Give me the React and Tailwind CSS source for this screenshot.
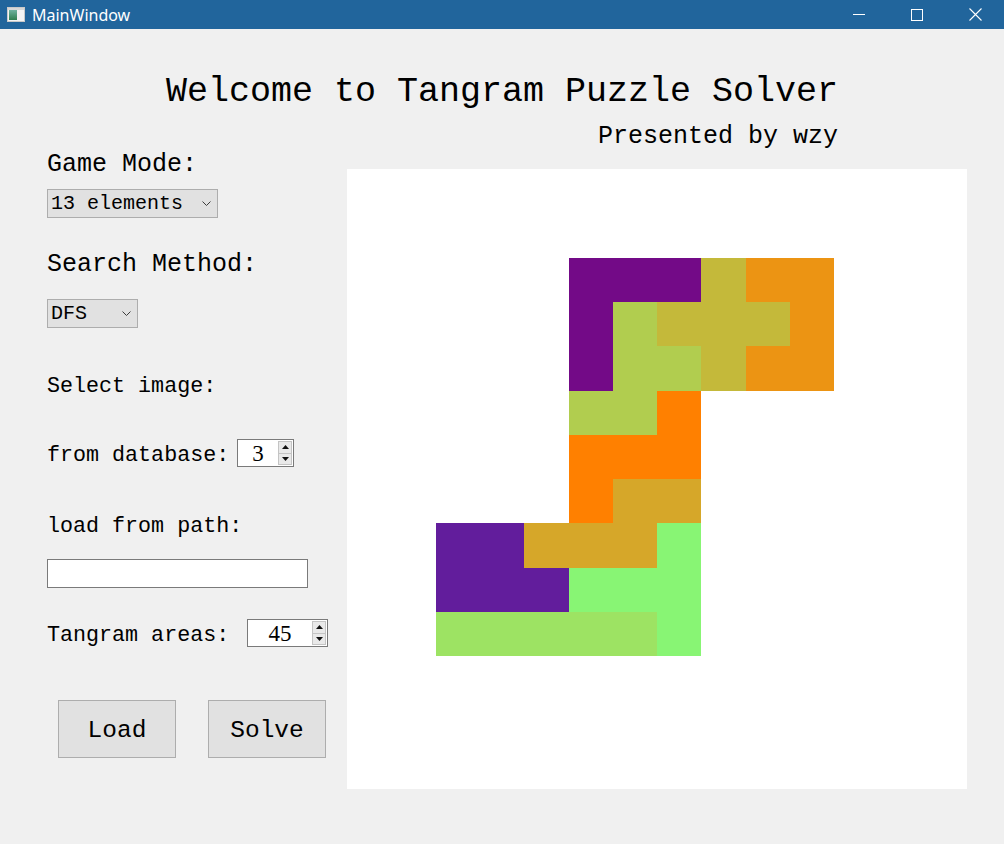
import React from 'react';

const mono = "font-['Liberation_Mono','DejaVu_Sans_Mono',monospace]";
const serif = "font-['Liberation_Serif','Times_New_Roman',serif]";

// one class per piece colour
const COLORS = {
  P: 'bg-[#730a87]',
  K: 'bg-[#c4b93a]',
  R: 'bg-[#ec9413]',
  L: 'bg-[#b1cd4f]',
  B: 'bg-[#ff8000]',
  G: 'bg-[#d6a729]',
  V: 'bg-[#621d9c]',
  N: 'bg-[#88f574]',
  M: 'bg-[#9de363]',
};

const ROWS = [
  '...PPPKRR',
  '...PLKKKR',
  '...PLLKRR',
  '...LLB...',
  '...BBB...',
  '...BGG...',
  'VVGGGN...',
  'VVVNNN...',
  'MMMMMN...',
];

function TitleBar() {
  return (
    <div className="h-[29px] bg-[#21659c] flex items-center text-white select-none">
      <svg width="18" height="15" viewBox="0 0 18 15" className="ml-[7px]">
        <defs>
          <linearGradient id="ic" x1="0" y1="0" x2="0" y2="1">
            <stop offset="0" stopColor="#6fb3a0" />
            <stop offset="1" stopColor="#2f7f4f" />
          </linearGradient>
        </defs>
        <rect x="0.5" y="0.5" width="17" height="14" fill="#f4f4f4" stroke="#c9c9c9" />
        <rect x="1" y="1" width="16" height="2" fill="#d8d8d8" />
        <rect x="2" y="3" width="8" height="10" fill="url(#ic)" />
      </svg>
      <span className="ml-[7px] font-['Noto_Sans',sans-serif] text-[16px] leading-none">MainWindow</span>
      <div className="ml-auto flex h-full">
        <div className="w-[58px] flex items-center justify-center">
          <div className="w-[12px] h-px bg-white" />
        </div>
        <div className="w-[58px] flex items-center justify-center">
          <div className="w-[12px] h-[12px] border border-white" />
        </div>
        <div className="w-[58px] flex items-center justify-center">
          <svg width="13" height="13" viewBox="0 0 13 13">
            <path d="M0.5 0.5 L12.5 12.5 M12.5 0.5 L0.5 12.5" stroke="white" strokeWidth="1.1" />
          </svg>
        </div>
      </div>
    </div>
  );
}

function Combo({ value, className }) {
  return (
    <div
      className={`h-[29px] bg-[#e1e1e1] border border-[#adadad] flex items-center justify-between pl-[3px] pr-[6px] ${className}`}
    >
      <span className={`${mono} text-[20px] leading-none text-black`}>{value}</span>
      <svg width="9" height="5" viewBox="0 0 9 5">
        <path d="M0.5 0.5 L4.5 4.5 L8.5 0.5" fill="none" stroke="#3c3c3c" strokeWidth="1" />
      </svg>
    </div>
  );
}

function SpinBox({ value, className }) {
  return (
    <div className={`h-[28px] bg-white border border-[#7a7a7a] flex ${className}`}>
      <div className={`flex-1 flex items-center justify-center ${serif} text-[23px] leading-none text-black`}>
        {value}
      </div>
      <div className="w-[15px] flex flex-col py-px pr-px">
        <div className="flex-1 bg-[#e9e9e9] border border-[#c4c4c4] flex items-center justify-center">
          <svg width="7" height="4" viewBox="0 0 7 4">
            <path d="M0 4 L3.5 0 L7 4 Z" fill="#111" />
          </svg>
        </div>
        <div className="flex-1 bg-[#e9e9e9] border border-[#c4c4c4] border-t-0 flex items-center justify-center">
          <svg width="7" height="4" viewBox="0 0 7 4">
            <path d="M0 0 L7 0 L3.5 4 Z" fill="#111" />
          </svg>
        </div>
      </div>
    </div>
  );
}

function Button({ children }) {
  return (
    <button className="w-[118px] h-[58px] bg-[#e1e1e1] border border-[#adadad] flex items-center justify-center">
      <span className={`${mono} text-[24.5px] leading-none text-black pt-[4px]`}>{children}</span>
    </button>
  );
}

function Board() {
  return (
    <div className="w-[620px] h-[620px] bg-white pt-[89px] pl-[89px]">
      <div className="grid grid-cols-[44px_44px_45px_44px_44px_44px_45px_44px_44px] grid-rows-[44px_44px_45px_44px_44px_44px_45px_44px_44px]">
        {ROWS.map((row, r) =>
          row.split('').map((c, i) => (
            <div key={`${r}-${i}`} className={c === '.' ? '' : COLORS[c]} />
          ))
        )}
      </div>
    </div>
  );
}

export default function App() {
  return (
    <div className="w-[1004px] h-[844px] bg-[#f0f0f0] overflow-hidden text-black">
      <TitleBar />

      <div className={`${mono} mt-[43px] h-[40px] leading-[40px] text-[35px] text-center`}>
        Welcome to Tangram Puzzle Solver
      </div>
      <div className={`${mono} mt-[10px] h-[26px] leading-[30px] text-[25px] text-right pr-[166px]`}>
        Presented by wzy
      </div>

      <div className="flex items-start pl-[47px]">
        <div className={`${mono} w-[300px] flex flex-col`}>
          <div className="h-[30px] leading-[34px] text-[25px]">Game Mode:</div>
          <Combo className="mt-[11px] w-[171px]" value="13 elements" />

          <div className="mt-[30px] h-[30px] leading-[34px] text-[25px]">Search Method:</div>
          <Combo className="mt-[21px] w-[91px]" value="DFS" />

          <div className="mt-[45px] h-[26px] leading-[28px] text-[21.7px]">Select image:</div>

          <div className="mt-[40px] h-[28px] flex items-center">
            <span className="w-[190px] text-[21.7px] leading-none pt-[6px]">from database:</span>
            <SpinBox className="w-[57px]" value="3" />
          </div>

          <div className="mt-[46px] h-[26px] leading-[28px] text-[21.7px]">load from path:</div>
          <input className="mt-[20px] w-[261px] h-[29px] bg-white border border-[#7a7a7a] outline-none" />

          <div className="mt-[31px] h-[28px] flex items-center">
            <span className="w-[200px] text-[21.7px] leading-none pt-[6px]">Tangram areas:</span>
            <SpinBox className="w-[81px]" value="45" />
          </div>

          <div className="mt-[53px] flex gap-[32px] pl-[11px]">
            <Button>Load</Button>
            <Button>Solve</Button>
          </div>
        </div>

        <div className="mt-[21px]">
          <Board />
        </div>
      </div>
    </div>
  );
}
